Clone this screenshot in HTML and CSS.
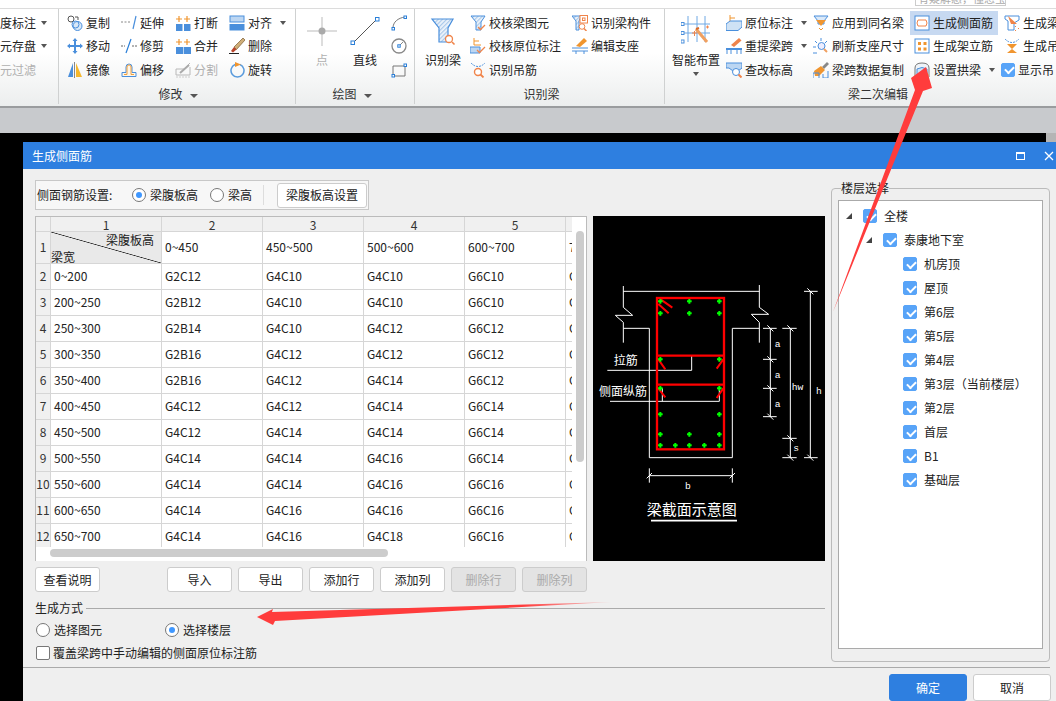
FILE: index.html
```html
<!DOCTYPE html>
<html lang="zh">
<head>
<meta charset="utf-8">
<title>生成侧面筋</title>
<link rel="stylesheet" href="styles.css">
</head>
<body>
<div class="topstrip"><div class="searchbox"><span>有疑解惑，懂您宝</span></div></div>

<div class="ribbon">
  <section class="group g0">
    <div class="gbody">
      <div class="col">
        <div class="item">度标注<i class="dd"></i></div>
        <div class="item">元存盘<i class="dd"></i></div>
        <div class="item off">元过滤</div>
      </div>
    </div>
  </section>

  <section class="group g1">
    <div class="gbody">
      <div class="col c54">
        <div class="item"><svg class="ic" viewBox="0 0 16 16"><circle cx="4" cy="4" r="3" fill="none" stroke="#555"/><path d="M8 2h3v3" fill="none" stroke="#555"/><circle cx="10.5" cy="11" r="4.5" fill="#d8e8f8" stroke="#4a8fdc"/><circle cx="8.5" cy="9.5" r="3.5" fill="none" stroke="#4a8fdc"/></svg>复制</div>
        <div class="item"><svg class="ic" viewBox="0 0 16 16"><path d="M8 0l2.500 3h-5zM8 16l-2.500-3h5zM0 8l3-2.500v5zM16 8l-3 2.500v-5z" fill="#4a8fdc"/><path d="M3 8h10M8 3v10" stroke="#4a8fdc" stroke-width="2"/></svg>移动</div>
        <div class="item"><svg class="ic" viewBox="0 0 16 16"><path d="M6 1v14H1z" fill="#4a8fdc"/><path d="M7.500 0v16" stroke="#888"/><path d="M9 1v14h6z" fill="#f5b82e"/></svg>镜像</div>
      </div>
      <div class="col c54">
        <div class="item"><svg class="ic" viewBox="0 0 16 16"><path d="M0 7h10" stroke="#888" stroke-dasharray="2 1.500"/><path d="M15 1l-3 13" stroke="#4a8fdc" stroke-width="1.200"/></svg>延伸</div>
        <div class="item"><svg class="ic" viewBox="0 0 16 16"><path d="M0 8h4M11 8h5" stroke="#666" stroke-dasharray="2 1"/><path d="M10 1L5 15" stroke="#2a7fd8" stroke-width="1.200"/></svg>修剪</div>
        <div class="item"><svg class="ic" viewBox="0 0 16 16"><path d="M1 14.500v-4h4V5a3 3 0 0 1 6 0v5.500h4v4z" fill="#fff6e6" stroke="#4a8fdc"/><path d="M3 12.500h3V5a2 2 0 0 1 4 0v7.500h3" fill="none" stroke="#f0a040"/></svg>偏移</div>
      </div>
      <div class="col c54">
        <div class="item"><svg class="ic" viewBox="0 0 16 16"><path d="M1 9h6.500v7H1zM9 9h6.500v7H9z" fill="#4a8fdc"/><path d="M1 4h6M4 1v6M9 4h6M12 1v6" stroke="#f0952f" stroke-width="1.200"/></svg>打断</div>
        <div class="item"><svg class="ic" viewBox="0 0 16 16"><path d="M1 9h15v7H1z" fill="#4a8fdc"/><path d="M8.500 9v7" stroke="#bcd6f2"/><path d="M1 4h6M4 1v6M9 4h6M12 1v6" stroke="#f0952f" stroke-width="1.200"/></svg>合并</div>
        <div class="item off"><svg class="ic" viewBox="0 0 16 16"><path d="M1 13V7h8l6-6M1 13h14V5" fill="none" stroke="#b8b8b8"/><path d="M5 11l9-8" stroke="#aaa" stroke-width="2"/><path d="M1 15h15" stroke="#ccc" stroke-dasharray="2 1"/></svg>分割</div>
      </div>
      <div class="col c54">
        <div class="item"><svg class="ic" viewBox="0 0 16 16"><rect x="1" y="1" width="14" height="6" fill="#bcd6f2" stroke="#4a8fdc"/><rect x="0.500" y="9" width="15" height="6.500" fill="#4a8fdc"/></svg>对齐<i class="dd"></i></div>
        <div class="item"><svg class="ic" viewBox="0 0 16 16"><path d="M14 0L5 9l2.500 2.500L16 2z" fill="#cfae78" stroke="#7a5a30" stroke-width=".7"/><path d="M5 9l-3 4 2 1.500 3.500-3z" fill="#b8432a"/><path d="M0 15.500h10" stroke="#222"/></svg>删除</div>
        <div class="item"><svg class="ic" viewBox="0 0 16 16"><path d="M6 2.500a6.500 6.500 0 1 0 5 0" fill="none" stroke="#5a9bdc" stroke-width="1.500"/><path d="M6 0l6 2.500L6 5z" fill="#f0952f"/></svg>旋转</div>
      </div>
    </div>
    <div class="glabel">修改<i class="dd wide"></i></div>
  </section>

  <section class="group g2">
    <div class="gbody">
      <div class="big bdot">
        <svg class="ic30" viewBox="0 0 30 30"><path d="M0 15h30M15 1v29" stroke="#bbb"/><circle cx="15" cy="15" r="3.500" fill="#aaa"/></svg>
        <span class="off">点</span>
      </div>
      <div class="big bline">
        <svg class="ic30" viewBox="0 0 30 30"><path d="M3 27L27 3" stroke="#555"/><rect x="1" y="25" width="3.500" height="3.500" fill="#fff" stroke="#2a7fd8"/><rect x="25.500" y="1.500" width="3.500" height="3.500" fill="#fff" stroke="#2a7fd8"/></svg>
        <span>直线</span>
      </div>
      <div class="col">
        <div class="item"><svg class="ic" viewBox="0 0 16 16"><path d="M2 13C2 7 7 3 14 2" fill="none" stroke="#777"/><rect x="1" y="12.500" width="2.500" height="2.500" fill="#fff" stroke="#2a7fd8"/><rect x="13" y="1" width="2.500" height="2.500" fill="#fff" stroke="#2a7fd8"/></svg></div>
        <div class="item"><svg class="ic" viewBox="0 0 16 16"><circle cx="8" cy="8" r="7" fill="none" stroke="#888" stroke-width="1.300"/><path d="M8 8l4-4" stroke="#888"/><rect x="6.800" y="6.800" width="2.400" height="2.400" fill="#fff" stroke="#2a7fd8"/></svg></div>
        <div class="item"><svg class="ic" viewBox="0 0 16 16"><path d="M2 4h12v10H2z" fill="none" stroke="#777"/><rect x="1" y="12.500" width="2.500" height="2.500" fill="#fff" stroke="#2a7fd8"/><rect x="13" y="2" width="2.500" height="2.500" fill="#fff" stroke="#2a7fd8"/></svg></div>
      </div>
    </div>
    <div class="glabel">绘图<i class="dd wide"></i></div>
  </section>

  <section class="group g3">
    <div class="gbody">
      <div class="big bshibie">
        <svg class="ic30" viewBox="0 0 30 30"><path d="M4 3h21l-5 9v14h-9V12z" fill="url(#hatch)" stroke="#4a8fdc" stroke-width="1.200"/><circle cx="21" cy="23" r="3.500" fill="#fff" stroke="#f0844a" stroke-width="1.300"/><path d="M24 26l2.500 2.500" stroke="#f0844a" stroke-width="1.600"/></svg>
        <span>识别梁</span>
      </div>
      <div class="col c102">
        <div class="item"><svg class="ic" viewBox="0 0 16 16"><path d="M1 1h14l-4 6v8H6V7z" fill="url(#hatch)" stroke="#4a8fdc"/><path d="M8 12l2.500 2.500L15 10" fill="none" stroke="#f0844a" stroke-width="1.300"/></svg>校核梁图元</div>
        <div class="item"><svg class="ic" viewBox="0 0 16 16"><path d="M4 0v7h7M4 3h5" fill="none" stroke="#f0952f"/><path d="M0 9h10v6H0z" fill="#bcd6f2" stroke="#4a8fdc"/><path d="M7 12l2.500 2.500L15 9" fill="none" stroke="#f0844a" stroke-width="1.300"/></svg>校核原位标注</div>
        <div class="item"><svg class="ic" viewBox="0 0 16 16"><path d="M1 1q7 7 14 0" fill="none" stroke="#4a8fdc" stroke-dasharray="2 1"/><circle cx="8" cy="10" r="3.500" fill="#fff" stroke="#f0844a" stroke-width="1.400"/><path d="M10.500 12.500l3 3" stroke="#f0844a" stroke-width="1.800"/></svg>识别吊筋</div>
      </div>
      <div class="col">
        <div class="item"><svg class="ic" viewBox="0 0 16 16"><path d="M0 1h9l-2 5v9H4V6z" fill="url(#hatch)" stroke="#4a8fdc"/><rect x="8" y="0.500" width="7.500" height="7.500" fill="#fff" stroke="#f0844a"/><rect x="10.500" y="3" width="2.500" height="2.500" fill="none" stroke="#f0844a"/><circle cx="10" cy="11.500" r="2.800" fill="#fff" stroke="#f0844a"/><path d="M12 13.500l2.500 2.500" stroke="#f0844a" stroke-width="1.500"/></svg>识别梁构件</div>
        <div class="item"><svg class="ic" viewBox="0 0 16 16"><path d="M4 8L12 0l3 3-7 6z" fill="#f0952f"/><path d="M0 10h16" stroke="#4a8fdc"/><path d="M0 13h16M4 13v3M12 13v3" stroke="#4a8fdc"/></svg>编辑支座</div>
      </div>
    </div>
    <div class="glabel">识别梁</div>
  </section>

  <section class="group g4">
    <div class="gbody">
      <div class="big bzn">
        <svg class="ic30" viewBox="0 0 30 30"><path d="M0 8h29M0 17h29M7 0v26M16 0v26M24 0v26" stroke="#6fa8e4"/><rect x="0" y="6.500" width="3" height="3" fill="#fff" stroke="#4a8fdc"/><rect x="0" y="15.500" width="3" height="3" fill="#fff" stroke="#4a8fdc"/><rect x="0" y="24" width="3" height="3" fill="#fff" stroke="#4a8fdc"/><path d="M15 13L26 26" stroke="#f0a060" stroke-width="3"/><path d="M15 13l3-1" stroke="#d86a2a" stroke-width="2"/><path d="M11 17h5M13.500 15v5" stroke="#f0844a"/><path d="M25 11h3M26.500 9.500v3" stroke="#f0844a"/></svg>
        <span>智能布置</span>
        <i class="dd lone"></i>
      </div>
      <div class="col c87">
        <div class="item"><svg class="ic" viewBox="0 0 16 16"><path d="M4 0v8h8M4 3h5" fill="none" stroke="#f0952f"/><path d="M0 9l4-3h12v6l-4 3.500H0z" fill="#cfe2f5" stroke="#4a8fdc"/></svg>原位标注<i class="dd"></i></div>
        <div class="item"><svg class="ic" viewBox="0 0 16 16"><path d="M5 7l8-7 2.500 2.500L8 9z" fill="#f0844a"/><path d="M0 10h16v2H0z" fill="#4a8fdc"/><path d="M1 12v4M5 12v4M11 12v4M15 12v4" stroke="#4a8fdc"/></svg>重提梁跨<i class="dd"></i></div>
        <div class="item"><svg class="ic" viewBox="0 0 16 16"><path d="M0 1h16v5l-4 3H7L3 6H0z" fill="#bcd6f2" stroke="#4a8fdc"/><circle cx="10" cy="10" r="3.500" fill="#fff" stroke="#4a8fdc"/><path d="M12.500 12.500l3 3" stroke="#f0844a" stroke-width="2"/></svg>查改标高</div>
      </div>
      <div class="col c99">
        <div class="item"><svg class="ic" viewBox="0 0 16 16"><path d="M1 1h14l-4 5v3H5V6z" fill="#dbe9f8" stroke="#4a8fdc"/><path d="M3 5h10l-5 6z" fill="#f0952f"/><path d="M6 13l2 2 2-2" fill="none" stroke="#f0952f"/></svg>应用到同名梁</div>
        <div class="item"><svg class="ic" viewBox="0 0 16 16"><path d="M8 0v3M2 3l2 2M14 3l-2 2M0 9h3M0 15h4" stroke="#4a8fdc"/><circle cx="8.500" cy="8" r="3.500" fill="#eef" stroke="#4a8fdc"/><path d="M11 11l3 3" stroke="#f0a060" stroke-width="2"/></svg>刷新支座尺寸</div>
        <div class="item"><svg class="ic" viewBox="0 0 16 16"><path d="M9 5l5-5 2 2-5 5z" fill="#888"/><path d="M1 9l7-5 4 4-6 6H2z" fill="#f0952f"/><path d="M0 11h6v5M0 16v-5M10 12v4h5v-7" fill="none" stroke="#4a8fdc"/></svg>梁跨数据复制</div>
      </div>
      <div class="col c93">
        <div class="item sel"><svg class="ic" viewBox="0 0 16 16"><rect x="1" y="1" width="14" height="14" fill="#fff" stroke="#4a8fdc"/><path d="M4 5h8M4 11h8M4 5q-2 3 0 6M12 5q2 3 0 6" fill="none" stroke="#f0844a"/></svg>生成侧面筋</div>
        <div class="item pad4"><svg class="ic" viewBox="0 0 16 16"><rect x="1" y="1" width="14" height="14" fill="#fff" stroke="#4a8fdc"/><path d="M4 4h3v3H4zM9.500 4h3v3h-3zM4 9.500h3v3H4zM9.500 9.500h3v3h-3z" fill="#f0952f"/></svg>生成架立筋</div>
        <div class="item pad4"><svg class="ic" viewBox="0 0 16 16"><path d="M1 15V6q0-5 7-5t7 5v9" fill="#eef3f8" stroke="#777"/><path d="M3 7q5-3 10 0v8H3z" fill="#cfe2f5" stroke="#4a8fdc"/><path d="M11 9l4 4-2 2z" fill="#f0a040"/></svg>设置拱梁<i class="dd"></i></div>
      </div>
      <div class="col">
        <div class="item"><svg class="ic" viewBox="0 0 16 16"><path d="M1 1h14v4l-5 3v7H4V6L1 4z" fill="#fff" stroke="#4a8fdc"/><path d="M4 1l9 8H7z" fill="#f0844a"/><path d="M11 11l1 1M14 13l1 1M11 15l1 1" stroke="#f0844a"/></svg>生成梁</div>
        <div class="item"><svg class="ic" viewBox="0 0 16 16"><path d="M1 1q7 7 14 0" fill="none" stroke="#4a8fdc" stroke-dasharray="2 1"/><path d="M3 6h10l-5 5zM8 11l5 4H3z" fill="#f0952f"/></svg>生成吊</div>
        <div class="item shift"><span class="cb on"></span>显示吊</div>
      </div>
    </div>
    <div class="glabel l2">梁二次编辑</div>
  </section>
</div>

<div class="band"></div>

<main class="workspace">
  <div class="wthumb"></div>
  <div class="dialog">
    <div class="titlebar">
      <span class="ttext">生成侧面筋</span>
      <span class="maxi"></span>
      <svg class="closex" viewBox="0 0 10 10"><path d="M1 1l8 8M9 1l-8 8" stroke="#fff" stroke-width="1.300"/></svg>
    </div>

    <div class="content">
      <div class="left">
        <div class="settings">
          <span class="slabel">侧面钢筋设置:</span>
          <label class="opt o1"><span class="radio on"></span>梁腹板高</label>
          <label class="opt o2"><span class="radio"></span>梁高</label>
          <span class="vdiv"></span>
          <button class="btn wbtn">梁腹板高设置</button>
        </div>

        <div class="tablebox">
          <div class="tableclip">
            <table>
              <colgroup><col class="k0"><col class="k1"><col class="k2"><col class="k2"><col class="k2"><col class="k2"><col class="k3"></colgroup>
              <tr class="hrow"><th></th><th>1</th><th>2</th><th>3</th><th>4</th><th>5</th><th>6</th></tr>
              <tr class="r1"><th>1</th><td class="diag"><div class="dgin"><span class="dtop">梁腹板高</span><span class="dbot">梁宽</span></div></td><td>0~450</td><td>450~500</td><td>500~600</td><td>600~700</td><td>700~</td></tr>
              <tr><th>2</th><td class="w">0~200</td><td>G2C12</td><td>G4C10</td><td>G4C10</td><td>G6C10</td><td>G6C10</td></tr>
              <tr><th>3</th><td class="w">200~250</td><td>G2B12</td><td>G4C10</td><td>G4C10</td><td>G6C10</td><td>G6C10</td></tr>
              <tr><th>4</th><td class="w">250~300</td><td>G2B14</td><td>G4C10</td><td>G4C12</td><td>G6C12</td><td>G6C12</td></tr>
              <tr><th>5</th><td class="w">300~350</td><td>G2B16</td><td>G4C12</td><td>G4C12</td><td>G6C12</td><td>G6C12</td></tr>
              <tr><th>6</th><td class="w">350~400</td><td>G2B16</td><td>G4C12</td><td>G4C14</td><td>G6C12</td><td>G6C12</td></tr>
              <tr><th>7</th><td class="w">400~450</td><td>G4C12</td><td>G4C12</td><td>G4C14</td><td>G6C14</td><td>G6C14</td></tr>
              <tr><th>8</th><td class="w">450~500</td><td>G4C12</td><td>G4C14</td><td>G4C14</td><td>G6C14</td><td>G6C14</td></tr>
              <tr><th>9</th><td class="w">500~550</td><td>G4C14</td><td>G4C14</td><td>G4C16</td><td>G6C14</td><td>G6C14</td></tr>
              <tr><th>10</th><td class="w">550~600</td><td>G4C14</td><td>G4C14</td><td>G4C16</td><td>G6C16</td><td>G6C16</td></tr>
              <tr><th>11</th><td class="w">600~650</td><td>G4C14</td><td>G4C16</td><td>G4C16</td><td>G6C16</td><td>G6C16</td></tr>
              <tr><th>12</th><td class="w">650~700</td><td>G4C14</td><td>G4C16</td><td>G4C18</td><td>G6C16</td><td>G6C16</td></tr>
            </table>
          </div>
          <div class="vthumb"></div>
          <div class="hthumb"></div>
        </div>

        <svg class="diagram" viewBox="9 18 696 1035" aria-label="梁截面示意图">
          <g fill="none" stroke="#fff" stroke-width="3">
            <path d="M100 244H508M100 228V292L128 316H76L100 337V398M508 225V292L536 313H484L508 337V398"/>
            <path d="M100 355H178V743H427V355H508"/>
            <path d="M52 481H305V437M60 574H388V535M217 574V535"/>
            <path d="M541 355V620M519 355H560M519 448H560M519 535H560M519 620H560"/>
            <path d="M601 355V743M577 355H620M577 685H620M577 743H620"/>
            <path d="M661 244V743M642 244H683M642 743H683"/>
            <path d="M178 775V818M427 775V818M178 797H427"/>
            <path d="M532 346L550 364M532 439L550 457M532 526L550 544M532 611L550 629M592 346L610 364M592 676L610 694M592 734L610 752M652 235L670 253M652 734L670 752M170 805L186 789M419 805L435 789"/>
          </g>
          <g fill="none" stroke="#f00">
            <rect x="201" y="264" width="201" height="454" stroke-width="7"/>
            <path stroke-width="7" d="M201 437H402M201 524H402"/>
            <path stroke-width="6" d="M212 268L247 293M205 282L236 310M205 448L226 478M400 448L380 476M205 535L226 562M400 535L380 564"/>
          </g>
          <g fill="#0f0">
            <use href="#gd" x="211" y="274"/><use href="#gd" x="298" y="274"/><use href="#gd" x="388" y="274"/>
            <use href="#gd" x="211" y="310"/><use href="#gd" x="298" y="310"/><use href="#gd" x="388" y="310"/>
            <use href="#gd" x="211" y="448"/><use href="#gd" x="388" y="448"/>
            <use href="#gd" x="211" y="535"/><use href="#gd" x="388" y="535"/>
            <use href="#gd" x="211" y="613"/><use href="#gd" x="388" y="613"/>
            <use href="#gd" x="211" y="673"/><use href="#gd" x="298" y="673"/><use href="#gd" x="388" y="673"/>
            <use href="#gd" x="211" y="706"/><use href="#gd" x="256" y="706"/><use href="#gd" x="298" y="706"/><use href="#gd" x="343" y="706"/><use href="#gd" x="388" y="706"/>
          </g>
          <g class="dtxt">
            <text x="71" y="466" class="cad">拉筋</text>
            <text x="27" y="558" class="cad">侧面纵筋</text>
            <text x="554" y="411" class="ltr">a</text><text x="554" y="504" class="ltr">a</text><text x="554" y="591" class="ltr">a</text>
            <text x="605" y="539" class="ltr">hw</text><text x="610" y="724" class="ltr">s</text><text x="678" y="553" class="ltr">h</text>
            <text x="285" y="836" class="ltr">b</text>
            <text x="170" y="915" class="cadt">梁截面示意图</text>
          </g>
          <path d="M183 932H441" stroke="#fff" stroke-width="5"/>
        </svg>

        <div class="btnrow">
          <button class="btn b65">查看说明</button>
          <button class="btn b65 ml67">导入</button>
          <button class="btn b65 ml6">导出</button>
          <button class="btn b65 ml6">添加行</button>
          <button class="btn b65 ml6">添加列</button>
          <button class="btn b65 ml6 dis">删除行</button>
          <button class="btn b65 ml6 dis">删除列</button>
        </div>

        <div class="legendline"><span>生成方式</span><i></i></div>
        <div class="modes">
          <label class="opt m1"><span class="radio"></span>选择图元</label>
          <label class="opt"><span class="radio on"></span>选择楼层</label>
        </div>
        <label class="opt cover"><span class="cb"></span>覆盖梁跨中手动编辑的侧面原位标注筋</label>
      </div>

      <fieldset class="floors">
        <legend>楼层选择</legend>
        <div class="tree">
          <div class="node n0"><i class="caret"></i><span class="cb on"></span>全楼</div>
          <div class="node n1"><i class="caret"></i><span class="cb on"></span>泰康地下室</div>
          <div class="node n2"><span class="cb on"></span>机房顶</div>
          <div class="node n2"><span class="cb on"></span>屋顶</div>
          <div class="node n2"><span class="cb on"></span>第6层</div>
          <div class="node n2"><span class="cb on"></span>第5层</div>
          <div class="node n2"><span class="cb on"></span>第4层</div>
          <div class="node n2"><span class="cb on"></span>第3层（当前楼层）</div>
          <div class="node n2"><span class="cb on"></span>第2层</div>
          <div class="node n2"><span class="cb on"></span>首层</div>
          <div class="node n2"><span class="cb on"></span>B1</div>
          <div class="node n2"><span class="cb on"></span>基础层</div>
        </div>
      </fieldset>
    </div>

    <div class="footer">
      <button class="btn fbtn primary">确定</button>
      <button class="btn fbtn">取消</button>
    </div>
  </div>
</main>

<svg class="overlay" viewBox="0 0 1056 701" aria-hidden="true">
  <defs>
    <pattern id="hatch" width="3" height="3" patternUnits="userSpaceOnUse" patternTransform="rotate(45)"><rect width="3" height="3" fill="#eef4fb"/><rect width="1.200" height="3" fill="#a9c8ea"/></pattern>
    <path id="gd" d="M-3-7h6v4h4v6h-4v4h-6v-4h-4v-6h4z"/>
    <linearGradient id="fade" x1="1" y1="0" x2="0" y2="0"><stop offset="0" stop-color="#ff3c3c" stop-opacity=".15"/><stop offset=".25" stop-color="#ff3c3c"/></linearGradient>
  </defs>
  <path d="M833 312L915 90L911 78L926 67L932 88L923 91Z" fill="#ff3c3c"/>
  <path d="M257 617L273 609L272 612L612 602L275 621L273 625Z" fill="url(#fade)"/>
</svg>
</body>
</html>
```

FILE: styles.css
```css
* { box-sizing: border-box; }
html, body { margin: 0; padding: 0; }
body {
  width: 1056px;
  height: 701px;
  overflow: hidden;
  position: relative;
  background: #000;
  font: 12px/16px "Noto Sans CJK SC", "Noto Sans", sans-serif;
  color: #222;
}
i { font-style: normal; }

/* top strip */
.topstrip { height: 8px; background: #fff; overflow: hidden; }
.searchbox {
  width: 91px; height: 6px; margin-left: 915px;
  border: 1px solid #ccc; border-top: 0;
  overflow: hidden; color: #aaa; font-size: 11px; line-height: 11px;
}
.searchbox span { display: block; margin-top: -7px; padding-left: 2px; white-space: nowrap; }

/* ribbon */
.ribbon {
  display: flex; height: 100px;
  border-top: 1px solid #dcdcdc; border-bottom: 2px solid #9a9c9e;
  background: linear-gradient(#fff 45%, #eceeee);
  overflow: hidden;
}
.group { flex: none; display: flex; flex-direction: column; border-right: 1px solid #cfd1d1; margin-bottom: 2px; }
.g0 { width: 59px; }
.g1 { width: 237px; padding-left: 8px; }
.g2 { width: 119px; }
.g3 { width: 250px; padding-left: 10px; }
.g4 { width: 392px; padding-left: 7px; border-right: 0; }
.gbody { display: flex; height: 77px; padding-top: 2px; }
.col { flex: none; display: flex; flex-direction: column; }
.c54 { width: 54px; }
.c102 { width: 102px; }
.c87 { width: 87px; }
.c99 { width: 97px; }
.c93 { width: 94px; }
.item { display: flex; align-items: center; gap: 3px; height: 23.500px; white-space: nowrap; color: #222; }
.off { color: #b0b0b0; }
.item.off { color: #b0b0b0; }
.ic { width: 16px; height: 16px; flex: none; }
.ic30 { width: 30px; height: 30px; display: block; }
.dd {
  display: inline-block; width: 0; height: 0; margin-left: 5px;
  border: 3px solid transparent; border-top: 4px solid #555; border-bottom: 0;
}
.wide { margin-left: 7px; border-width: 4px 4px 0; vertical-align: 1px; }
.lone { margin: 4px 0 0; }
.g0 .item { gap: 0; }
.g0 .dd { margin-left: 5px; }
.glabel { text-align: center; line-height: 16px; color: #333; padding-right: 6px; }
.l2 { padding-left: 176px; text-align: left; }
.big { flex: none; display: flex; flex-direction: column; align-items: center; }
.big svg { margin-top: 5px; margin-bottom: 6px; }
.bdot { width: 30px; margin: 0 13px 0 11px; }
.bline { width: 30px; margin-right: 11px; }
.bshibie { width: 45px; margin-right: 0; align-items: flex-start; }
.bshibie svg { margin-left: 3px; }
.bzn { width: 48px; margin-right: 6px; align-items: center; }
.sel { background: #c7d9f1; padding-left: 4px; margin-right: 6px; }
.pad4 { padding-left: 4px; }
.shift { margin-left: -3px; }
.cb {
  display: inline-block; flex: none; position: relative;
  width: 14px; height: 14px;
  border: 1px solid #777; border-radius: 2px; background: #fff;
}
.cb.on { background: #58a4f8; border-color: #58a4f8; }
.cb.on::after {
  content: ""; position: absolute; left: 2.500px; top: 2.500px;
  width: 7px; height: 4px;
  border-left: 2px solid #fff; border-bottom: 2px solid #fff;
  transform: rotate(-45deg);
}

/* band + workspace */
.band { height: 25px; background: #c8cacd; }
.workspace { position: relative; height: 568px; padding: 9px 0 0 23px; background: #000; overflow: hidden; }
.wthumb { position: absolute; right: 0; top: 0; width: 10px; height: 9px; background: #b5b5b5; }
.dialog { width: 1033px; height: 559px; background: #efefef; }
.titlebar { display: flex; align-items: center; height: 27px; padding-left: 9px; background: #2e7fe0; color: #fff; }
.ttext { flex: 1; padding-top: 1px; }
.maxi { width: 9px; height: 8px; margin-right: 19px; border: 1px solid #fff; border-top-width: 2px; }
.closex { width: 10px; height: 10px; margin-right: 2px; }

.content { display: flex; height: 499px; padding: 11px 0 0 12px; border-bottom: 1px solid #aaa; margin-right: 6px; }
.left { flex: none; width: 790px; display: grid; grid-template-columns: 558px 232px; grid-template-rows: auto auto auto; align-content: start; }
.settings {
  grid-column: 1 / 3; justify-self: start;
  display: flex; align-items: center; width: 334px; height: 30px;
  background: #f7f7f7; border: 1px solid #c8c8c8; margin-bottom: 6px;
}
.slabel { margin-left: 1px; width: 95px; }
.opt { display: flex; align-items: center; gap: 4px; white-space: nowrap; }
.o1 { margin-right: 12px; }
.o2 { margin-right: 11px; }
.vdiv { width: 1px; height: 20px; background: #ddd; margin-right: 13px; }
.radio {
  display: inline-block; flex: none; position: relative;
  width: 14px; height: 14px; border-radius: 50%;
  border: 1px solid #777; background: #fff;
}
.radio.on::after {
  content: ""; position: absolute; left: 3px; top: 3px;
  width: 6px; height: 6px; border-radius: 50%; background: #3f97ff;
}
.btn {
  font: inherit; color: #222; padding: 0;
  background: #fff; border: 1px solid #ccc; border-radius: 3px;
}
.wbtn { width: 90px; height: 25px; }
.b65 { width: 65px; height: 25px; flex: none; }
.ml67 { margin-left: 67px; }
.ml6 { margin-left: 6px; }
.btn.dis { background: #e3e3e3; color: #aaa; }

.tablebox {
  position: relative; width: 552px; height: 345px;
  background: #fff; border: 1px solid #bbb; border-bottom: 0;
}
.tableclip { width: 536px; height: 330px; overflow: hidden; }
table { table-layout: fixed; width: 596px; border-collapse: separate; border-spacing: 0; }
.k0 { width: 15px; } .k1 { width: 111px; } .k2 { width: 101px; } .k3 { width: 66px; }
th, td {
  padding: 0 0 2px 3px; height: 26px; line-height: 14px;
  border-right: 1px solid #d6d6d6; border-bottom: 1px solid #d6d6d6;
  font-weight: 400; text-align: left; white-space: nowrap; color: #222;
}
th { background: #f0f0f0; text-align: center; padding: 0 0 2px; color: #333; }
.hrow th { height: 15px; padding: 0; line-height: 13px; }
.r1 th, .r1 td { height: 32px; }
td.w { padding-left: 3px; }
td.diag {
  padding: 0; background:
    linear-gradient(to top right, transparent calc(50% - .7px), #222 50%, transparent calc(50% + .7px)), #e9e9e9;
}
.dgin { display: flex; flex-direction: column; justify-content: space-between; height: 30px; }
.dtop { align-self: flex-end; margin-right: 7px; }
.dbot { margin-bottom: -1px; }
.vthumb { position: absolute; left: 540px; top: 14px; width: 8px; height: 231px; border-radius: 4px; background: #ccc; }
.hthumb { position: absolute; left: 14px; top: 332px; width: 338px; height: 8px; border-radius: 4px; background: #ccc; }

.diagram { display: block; width: 232px; height: 345px; background: #000; }
.cad { font-size: 36px; fill: #fff; }
.cadt { font-size: 45px; fill: #fff; }
.ltr { font: 29px "Liberation Mono", monospace; fill: #fff; }

.btnrow { grid-column: 1 / 3; display: flex; margin-top: 6px; height: 25px; }
.legendline { grid-column: 1 / 3; display: flex; align-items: center; gap: 3px; margin-top: 8px; }
.legendline i { flex: 1; height: 1px; background: #aaa; }
.modes { grid-column: 1 / 3; display: flex; margin-top: 3px; height: 22px; align-items: center; padding-left: 1px; }
.m1 { width: 129px; }
.cover { grid-column: 1 / 3; margin: 4px 0 0 1px; gap: 3px; }

.floors {
  flex: none; width: 219px; height: 482px; margin: 0 0 0 6px; padding: 4px 6px 12px;
  border: 1px solid #bbb; border-radius: 4px; min-width: 0;
}
.floors legend { padding: 0; margin-left: 3px; line-height: 16px; }
.tree { height: 449px; padding-top: 3px; background: #fff; border: 1px solid #aaa; }
.node { display: flex; align-items: center; height: 24px; white-space: nowrap; gap: 7px; }
.n0 { padding-left: 7px; }
.n1 { padding-left: 27px; }
.n2 { padding-left: 64px; gap: 7px; }
.caret { width: 0; height: 0; margin-right: 4px; border-left: 6px solid transparent; border-bottom: 6px solid #444; }

.footer { display: flex; justify-content: flex-start; gap: 6px; padding: 6px 0 0 866px; }
.fbtn { width: 78px; height: 27px; flex: none; }
.primary { background: #2e7fe0; border-color: #2e7fe0; color: #fff; }

.overlay { position: absolute; left: 0; top: 0; width: 1056px; height: 701px; pointer-events: none; }
```
